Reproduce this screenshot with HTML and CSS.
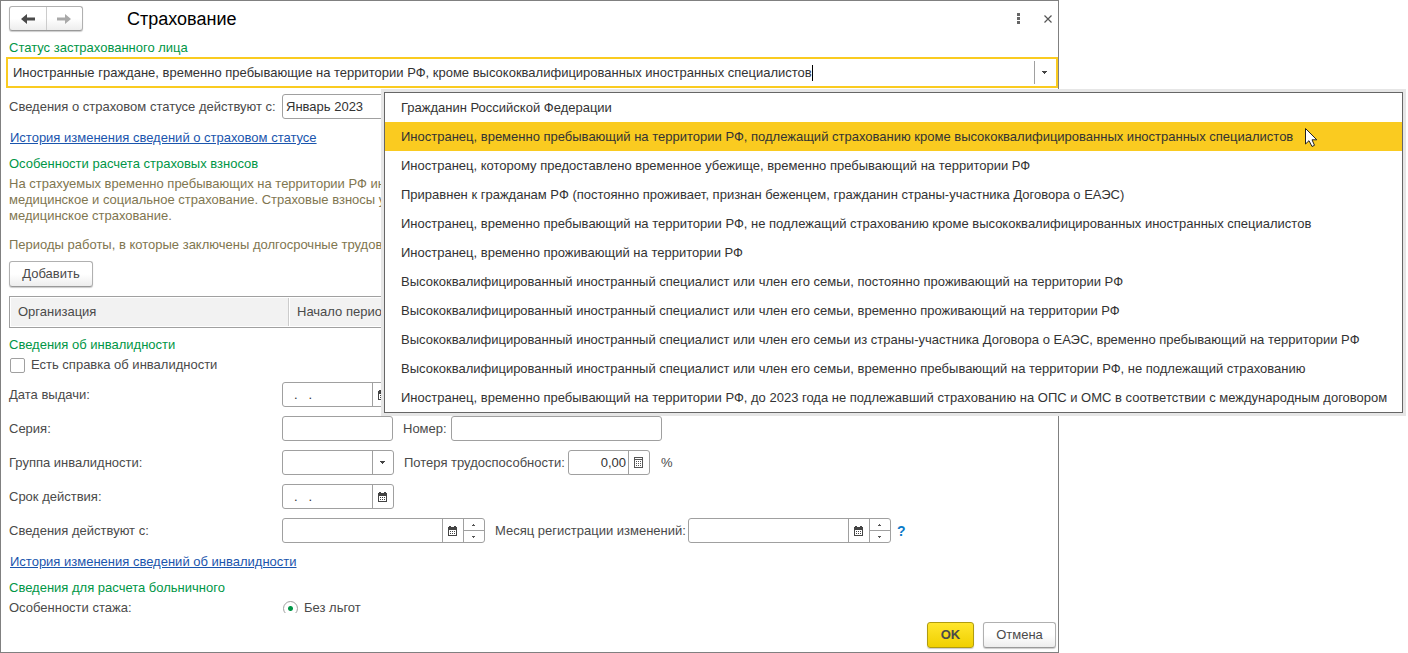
FILE: index.html
```html
<!DOCTYPE html>
<html lang="ru">
<head>
<meta charset="utf-8">
<title>Страхование</title>
<link rel="stylesheet" href="styles.css">
</head>
<body>
<svg class="sprites" aria-hidden="true">
  <symbol id="i-cal" viewBox="0 0 9 10">
    <path fill="#444" fill-rule="evenodd" d="M0 1H1V0H3V1H6V0H8V1H9V10H0ZM1 4V9H8V4Z"/>
    <path fill="#444" d="M2 5h1v1H2zM4 5h1v1H4zM6 5h1v1H6zM2 7h1v1H2zM4 7h1v1H4zM6 7h1v1H6z"/>
  </symbol>
  <symbol id="i-calc" viewBox="0 0 9 11">
    <path fill="#555" fill-rule="evenodd" d="M0 0H9V11H0ZM1 1V2H8V1ZM1 3V10H8V3Z"/>
    <path fill="#555" d="M2 4h1v1H2zM4 4h1v1H4zM6 4h1v1H6zM2 6h1v1H2zM4 6h1v1H4zM6 6h1v1H6zM2 8h1v1H2zM4 8h1v1H4zM6 8h1v1H6z"/>
  </symbol>
  <symbol id="i-down" viewBox="0 0 5 3"><path fill="#444" d="M0 0h5v1H4v1H3v1H2V2H1V1H0z"/></symbol>
  <symbol id="i-tick-up" viewBox="0 0 3 2"><path fill="#555" d="M1 0h1v1h1v1H0V1h1z"/></symbol>
  <symbol id="i-tick-down" viewBox="0 0 3 2"><path fill="#555" d="M0 0h3v1H2v1H1V1H0z"/></symbol>
</svg>

<main class="window">
  <header class="titlebar">
    <div class="nav">
      <button type="button" aria-label="Назад"><svg width="14" height="10" viewBox="0 0 14 10"><path fill="#4a4a4a" d="M0 5 6 0V3.500H14V6.500H6V10Z"/></svg></button>
      <button type="button" aria-label="Вперед"><svg width="14" height="10" viewBox="0 0 14 10"><path fill="#a9a9a9" d="M14 5 8 0V3.500H0V6.500H8V10Z"/></svg></button>
    </div>
    <h1>Страхование</h1>
    <button type="button" class="plain" aria-label="Еще"><svg width="3" height="11" viewBox="0 0 3 11"><path fill="#666" d="M0 0h3v3H0zM0 4h3v3H0zM0 8h3v3H0z"/></svg></button>
    <button type="button" class="plain close" aria-label="Закрыть"><svg width="8" height="8" viewBox="0 0 8 8"><path stroke="#555" stroke-width="1.2" d="M.5.5l7 7M7.5.5l-7 7"/></svg></button>
  </header>

  <form class="form" id="form">
    <label class="section" for="status">Статус застрахованного лица</label>
    <div class="status">
      <input id="status" value="Иностранные граждане, временно пребывающие на территории РФ, кроме высококвалифицированных иностранных специалистов">
      <span class="caret"></span>
      <button type="button" aria-label="Выбрать"><svg width="5" height="3"><use href="#i-down"/></svg></button>
    </div>

    <div class="row">
      <label class="name" for="since">Сведения о страховом статусе действуют с:</label>
      <div class="field month"><input id="since" value="Январь 2023"></div>
    </div>
    <a class="link" href="#">История изменения сведений о страховом статусе</a>

    <h2 class="section fees">Особенности расчета страховых взносов</h2>
    <p class="note">На страхуемых временно пребывающих на территории РФ ин<br>медицинское и социальное страхование. Страховые взносы у<br>медицинское страхование.</p>
    <p class="note periods">Периоды работы, в которые заключены долгосрочные трудов</p>
    <button type="button" class="button add">Добавить</button>
    <table class="grid">
      <tr><th class="org">Организация</th><th>Начало перио</th></tr>
    </table>

    <h2 class="section disability">Сведения об инвалидности</h2>
    <label class="option"><input type="checkbox">Есть справка об инвалидности</label>

    <div class="rows">
      <div class="row">
        <label class="name" for="issued">Дата выдачи:</label>
        <div class="field short"><input id="issued" class="date" value=".   ."><button type="button" class="cell" aria-label="Календарь"><svg width="9" height="10"><use href="#i-cal"/></svg></button></div>
      </div>
      <div class="row">
        <label class="name" for="series">Серия:</label>
        <div class="field series"><input id="series"></div>
        <label class="aside number" for="number">Номер:</label>
        <div class="field long"><input id="number"></div>
      </div>
      <div class="row">
        <label class="name" for="group">Группа инвалидности:</label>
        <div class="field short"><select id="group"><option></option></select><span class="cell"><svg width="5" height="3"><use href="#i-down"/></svg></span></div>
        <label class="aside loss" for="loss">Потеря трудоспособности:</label>
        <div class="field percent"><input id="loss" class="amount" value="0,00"><button type="button" class="cell" aria-label="Калькулятор"><svg width="9" height="11"><use href="#i-calc"/></svg></button></div>
        <span class="unit">%</span>
      </div>
      <div class="row">
        <label class="name" for="term">Срок действия:</label>
        <div class="field short"><input id="term" class="date" value=".   ."><button type="button" class="cell" aria-label="Календарь"><svg width="9" height="10"><use href="#i-cal"/></svg></button></div>
      </div>
      <div class="row">
        <label class="name" for="valid">Сведения действуют с:</label>
        <div class="field month"><input id="valid"><button type="button" class="cell" aria-label="Календарь"><svg width="9" height="10"><use href="#i-cal"/></svg></button><span class="spin"><button type="button" aria-label="Больше"><svg width="3" height="2"><use href="#i-tick-up"/></svg></button><button type="button" aria-label="Меньше"><svg width="3" height="2"><use href="#i-tick-down"/></svg></button></span></div>
        <label class="aside change" for="change">Месяц регистрации изменений:</label>
        <div class="field month"><input id="change"><button type="button" class="cell" aria-label="Календарь"><svg width="9" height="10"><use href="#i-cal"/></svg></button><span class="spin"><button type="button" aria-label="Больше"><svg width="3" height="2"><use href="#i-tick-up"/></svg></button><button type="button" aria-label="Меньше"><svg width="3" height="2"><use href="#i-tick-down"/></svg></button></span></div>
        <button type="button" class="help">?</button>
      </div>
    </div>

    <a class="link" href="#">История изменения сведений об инвалидности</a>
    <h2 class="section sick">Сведения для расчета больничного</h2>
    <div class="row seniority">
      <span class="name">Особенности стажа:</span>
      <label class="option"><input type="radio" name="seniority" checked>Без льгот</label>
    </div>
  </form>

  <footer class="actions">
    <button type="submit" form="form" class="button primary">OK</button>
    <button type="button" class="button cancel">Отмена</button>
  </footer>
</main>

<ul class="menu" role="listbox">
  <li role="option">Гражданин Российской Федерации</li>
  <li role="option" class="active" aria-selected="true">Иностранец, временно пребывающий на территории РФ, подлежащий страхованию кроме высококвалифицированных иностранных специалистов
    <svg class="pointer" width="13" height="20" viewBox="0 0 13 20"><path fill="#fff" stroke="#222" d="M.5.5V16L4 12.700 7 18.500 9.500 17.300 7 11.800H11.800Z"/></svg>
  </li>
  <li role="option">Иностранец, которому предоставлено временное убежище, временно пребывающий на территории РФ</li>
  <li role="option">Приравнен к гражданам РФ (постоянно проживает, признан беженцем, гражданин страны-участника Договора о ЕАЭС)</li>
  <li role="option">Иностранец, временно пребывающий на территории РФ, не подлежащий страхованию кроме высококвалифицированных иностранных специалистов</li>
  <li role="option">Иностранец, временно проживающий на территории РФ</li>
  <li role="option">Высококвалифицированный иностранный специалист или член его семьи, постоянно проживающий на территории РФ</li>
  <li role="option">Высококвалифицированный иностранный специалист или член его семьи, временно проживающий на территории РФ</li>
  <li role="option">Высококвалифицированный иностранный специалист или член его семьи из страны-участника Договора о ЕАЭС, временно пребывающий на территории РФ</li>
  <li role="option">Высококвалифицированный иностранный специалист или член его семьи, временно пребывающий на территории РФ, не подлежащий страхованию</li>
  <li role="option">Иностранец, временно пребывающий на территории РФ, до 2023 года не подлежавший страхованию на ОПС и ОМС в соответствии с международным договором</li>
</ul>
</body>
</html>
```
FILE: styles.css
```css
* { box-sizing: border-box; }

body {
  margin: 0;
  position: relative;
  background: #fff;
  color: #4a4a4a;
  font: 13px/16px "Liberation Sans", Arial, sans-serif;
}

button, input, select { font: inherit; color: inherit; }
button { padding: 0; border: 0; background: none; }
svg { display: block; }
.sprites { display: none; }

.window {
  display: flex;
  flex-direction: column;
  max-width: 1059px;
  height: 100vh;
  border: 1px solid #808080;
}

/* Title bar */
.titlebar {
  display: flex;
  align-items: center;
  height: 35px;
  padding-left: 8px;
}
.nav {
  display: flex;
  width: 74px;
  height: 25px;
  border: 1px solid #b0b0b0;
  border-bottom-color: #999;
  border-radius: 3px;
  background: linear-gradient(#fff 50%, #ededed);
  box-shadow: 0 1px 1px #ccc;
}
.nav button { display: flex; flex: 1; align-items: center; justify-content: center; }
.nav button + button { border-left: 1px solid #ccc; }
h1 {
  flex: 1;
  margin: 0 0 0 44px;
  color: #000;
  font-size: 18px;
  font-weight: 400;
  line-height: 24px;
}
.plain { display: flex; align-items: center; justify-content: center; width: 20px; height: 24px; }
.close { margin: 0 0 0 10px; }

/* Form */
.form {
  flex: 1;
  min-height: 0;
  padding: 4px 0 0 8px;
  overflow: hidden;
}
h2, p { margin: 0; font: inherit; }
.section { display: block; color: #009646; }
.link { display: table; margin: 11px 0 0 1px; color: #1a55ad; }
.fees { margin-top: 10px; }
.note { margin-top: 4px; color: #7f7650; white-space: nowrap; }
.periods { margin-top: 13px; }
.disability { margin-top: 9px; }
.sick { margin-top: 10px; }

.status {
  display: flex;
  align-items: center;
  height: 31px;
  margin: 1px 0 6px -3px;
  padding-left: 5px;
  border: 2px solid #facb20;
  color: #333;
}
.status input { field-sizing: content; min-width: 0; padding: 0; border: 0; outline: 0; }
.caret { width: 1px; height: 16px; background: #000; }
.status button {
  display: flex;
  align-items: center;
  justify-content: center;
  width: 22px;
  height: 23px;
  margin-left: auto;
  padding-right: 2px;
  border-left: 1px solid #a0a0a0;
}

.row { display: flex; align-items: center; }
.name { flex: 0 0 273px; }
.rows { display: grid; gap: 9px; margin: 9px 0 11px; }
.field {
  display: flex;
  height: 25px;
  border: 1px solid #a0a0a0;
  border-radius: 3px;
  color: #333;
}
.field input, .field select {
  flex: 1;
  min-width: 0;
  padding: 0 3px;
  border: 0;
  border-radius: 3px;
  outline: 0;
  background: none;
  appearance: none;
}
.field .date { padding-left: 11px; white-space: pre; }
.field .amount { padding: 0 2px; text-align: right; }
.short { width: 112px; }
.series { width: 111px; }
.long { width: 211px; }
.percent { width: 82px; }
.month { width: 203px; }
.cell {
  display: flex;
  align-items: center;
  justify-content: center;
  width: 21px;
  padding-right: 2px;
  border-left: 1px solid #a0a0a0;
}
.spin { display: flex; flex-direction: column; width: 21px; border-left: 1px solid #a0a0a0; }
.spin button { display: flex; flex: 1; align-items: center; justify-content: center; padding-right: 2px; }
.spin button + button { border-top: 1px solid #a0a0a0; }
.aside { margin-left: 10px; white-space: nowrap; }
.number { width: 48px; }
.loss { width: 164px; }
.change { width: 193px; }
.unit { margin-left: 11px; }
.help { margin-left: 6px; color: #0a7ac8; font-size: 14px; font-weight: 700; }

.option { display: flex; align-items: center; gap: 6px; }
.option input {
  width: 15px;
  height: 15px;
  margin: 0;
  border: 1px solid #a0a0a0;
  border-radius: 2px;
  appearance: none;
}
.disability + .option { margin: 4px 0 0 1px; }
.option input[type="radio"] { border-radius: 50%; }
.option input:checked { background: radial-gradient(circle, #009646 2px, #fff 3px); }
.seniority { margin-top: 4px; }
.seniority .option { margin-left: 1px; }

/* Buttons */
.button {
  height: 26px;
  border: 1px solid #b0b0b0;
  border-bottom-color: #999;
  border-radius: 3px;
  background: linear-gradient(#fff 50%, #ededed);
  box-shadow: 0 1px 1px #ccc;
}
.add { display: block; width: 84px; margin-top: 8px; }
.actions {
  display: flex;
  justify-content: flex-end;
  gap: 9px;
  padding: 9px 2px 4px;
}
.primary {
  width: 47px;
  border-color: #b09c10;
  background: linear-gradient(#ffe62e, #f0d000);
  font-weight: 700;
}
.cancel { width: 73px; }

/* Table */
.grid {
  width: 1040px;
  max-width: 100%;
  height: 32px;
  margin-top: 9px;
  border: 1px solid #a0a0a0;
  border-spacing: 1px;
  table-layout: fixed;
}
.grid th {
  padding: 0 7px;
  background: #f2f2f2;
  font-weight: 400;
  text-align: left;
}
.grid .org { width: 278px; border-right: 1px solid #ccc; }

/* Drop-down list over the form */
.menu {
  position: absolute;
  top: 92px;
  right: 5px;
  left: 384px;
  margin: 0;
  padding: 0;
  border: 1px solid #666;
  outline: 3px solid #e6e6e6;
  background: #fff;
  color: #333;
  line-height: 29px;
  list-style: none;
  white-space: nowrap;
}
.menu li { display: flex; padding: 0 16px; }
.active { background: #facb20; }
.pointer { margin: 6px 0 0 12px; }
```
